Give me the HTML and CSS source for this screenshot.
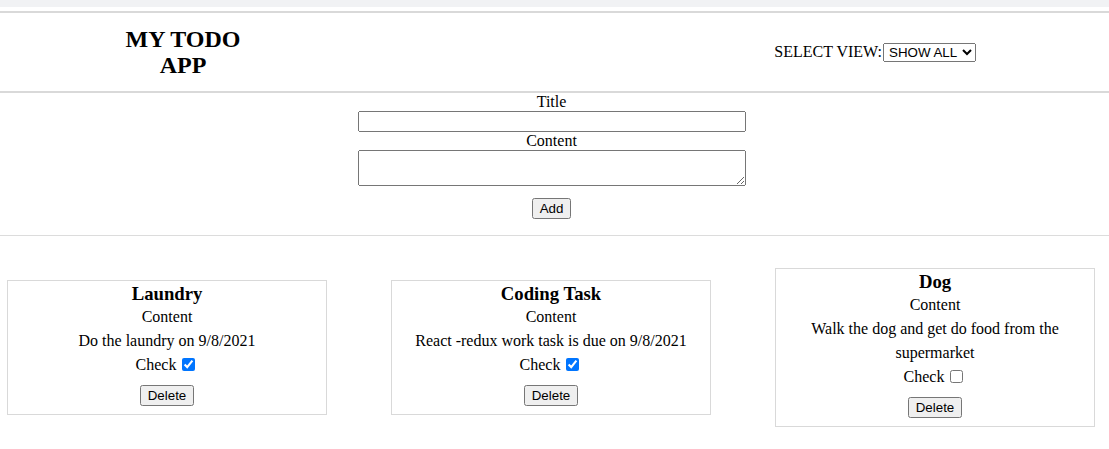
FILE: index.html
```html
<!DOCTYPE html>
<html lang="en">
<head>
<meta charset="utf-8">
<title>My Todo App</title>
<link rel="stylesheet" href="styles.css">
</head>
<body>
<div class="topband"></div>
<header class="header">
  <h1 class="brand">MY TODO APP</h1>
  <div class="view">
    <label class="view-label" for="view">SELECT VIEW:</label><select id="view" class="view-select"><option>SHOW ALL</option><option>COMPLETED</option><option>ACTIVE</option></select>
  </div>
</header>
<section class="form">
  <label class="form-label" for="title">Title</label>
  <input id="title" class="form-input" type="text">
  <label class="form-label" for="content">Content</label>
  <textarea id="content" class="form-textarea"></textarea>
  <button class="btn add-btn" type="button">Add</button>
</section>
<hr class="divider">
<section class="cards">
  <div class="card">
    <h3 class="card-title">Laundry</h3>
    <p class="card-line">Content</p>
    <p class="card-line">Do the laundry on 9/8/2021</p>
    <p class="card-line">Check <input type="checkbox" class="check" checked></p>
    <button class="btn del-btn" type="button">Delete</button>
  </div>
  <div class="card">
    <h3 class="card-title">Coding Task</h3>
    <p class="card-line">Content</p>
    <p class="card-line">React -redux work task is due on 9/8/2021</p>
    <p class="card-line">Check <input type="checkbox" class="check" checked></p>
    <button class="btn del-btn" type="button">Delete</button>
  </div>
  <div class="card">
    <h3 class="card-title">Dog</h3>
    <p class="card-line">Content</p>
    <p class="card-line">Walk the dog and get do food from the supermarket</p>
    <p class="card-line">Check <input type="checkbox" class="check"></p>
    <button class="btn del-btn" type="button">Delete</button>
  </div>
</section>
</body>
</html>
```

FILE: styles.css
```css
html, body {
  margin: 0;
  padding: 0;
  background: #ffffff;
}

body {
  font-family: "Liberation Serif", "Times New Roman", serif;
  font-size: 16px;
  color: #000;
}

.topband {
  height: 7px;
  background: #f1f2f4;
  margin-bottom: 4px;
}

.header {
  display: flex;
  align-items: center;
  height: 78px;
  border-top: 2px solid #d9d9d9;
  border-bottom: 2px solid #d9d9d9;
  padding-left: 123px;
  padding-right: 133px;
}

.brand {
  margin: 0;
  width: 120px;
  font-size: 24px;
  font-weight: bold;
  line-height: 26px;
  text-align: center;
}

.view {
  margin-left: auto;
  display: flex;
  align-items: center;
}

.view-label {
  font-size: 16px;
}

.view-select {
  box-sizing: border-box;
  width: 93px;
  font-family: "Liberation Sans", Arial, sans-serif;
  font-size: 13.333px;
  height: 19px;
  padding: 0 0 0 1px;
  margin: 0 0 0 1px;
}

.form {
  display: flex;
  flex-direction: column;
  align-items: center;
  padding-right: 6px;
}

.form-label {
  display: block;
  line-height: 18px;
}

.form-input {
  box-sizing: border-box;
  width: 388px;
  height: 21px;
  margin: 0;
  font-family: "Liberation Sans", Arial, sans-serif;
  font-size: 13.333px;
}

.form-textarea {
  box-sizing: border-box;
  width: 388px;
  height: 36px;
  margin: 0;
  font-family: "Liberation Mono", monospace;
  font-size: 13.333px;
}

.btn {
  font-family: "Liberation Sans", Arial, sans-serif;
  font-size: 13.333px;
  height: 21px;
  padding: 1px 6px;
  margin: 0;
}

.add-btn {
  margin-top: 12px;
}

.divider {
  margin: 16px 0 0;
  border: 0;
  border-top: 1px solid #dcdcdc;
  height: 0;
}

.cards {
  display: flex;
  align-items: center;
  gap: 64px;
  padding: 32px 0 0 7px;
}

.card {
  box-sizing: border-box;
  width: 320px;
  border: 1px solid #d9d9d9;
  padding: 1px 0 8px;
  text-align: center;
}

.card-title {
  margin: 0;
  font-size: 18.72px;
  line-height: 23px;
}

.card-line {
  margin: 0;
  line-height: 24px;
}

.check {
  margin: 3px 3px 3px 2px;
  vertical-align: -1px;
}

.del-btn {
  margin-top: 8px;
}
```
